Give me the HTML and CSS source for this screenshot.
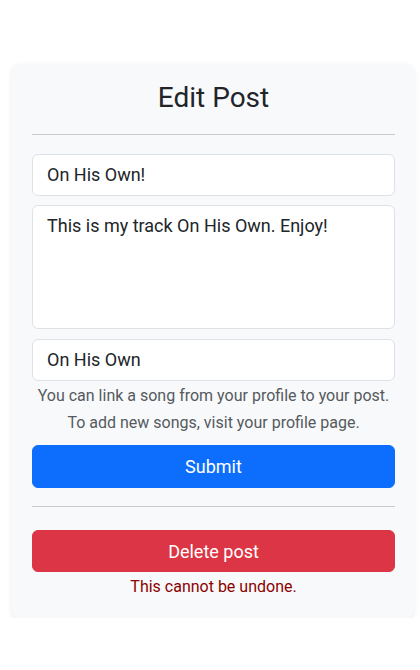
FILE: index.html
```html
<!DOCTYPE html>
<html lang="en">
<head>
<meta charset="utf-8">
<title>Edit Post</title>
<link rel="stylesheet" href="styles.css">
</head>
<body>
<main class="card">
  <h1 class="title">Edit Post</h1>
  <hr class="rule rule-top">
  <form class="form">
    <input class="field" type="text" value="On His Own!">
    <textarea class="field area">This is my track On His Own. Enjoy!</textarea>
    <input class="field" type="text" value="On His Own">
    <p class="help help-first">You can link a song from your profile to your post.</p>
    <p class="help">To add new songs, visit your profile page.</p>
    <button class="btn btn-primary" type="button">Submit</button>
  </form>
  <hr class="rule rule-bottom">
  <button class="btn btn-danger" type="button">Delete post</button>
  <p class="warning">This cannot be undone.</p>
</main>
</body>
</html>
```

FILE: styles.css
```css
* { box-sizing: border-box; }

html, body {
  margin: 0;
  padding: 0;
  background: #ffffff;
}

body {
  font-family: Roboto, "Liberation Sans", sans-serif;
  color: #212529;
  padding-top: 64px;
}

.card {
  width: 402px;
  margin-left: 12px;
  background: #f8f9fa;
  border-radius: 8px;
  box-shadow: 0 2px 6px rgba(0, 0, 0, 0.08);
  padding: 17px 19px 19px 20px;
  display: flex;
  flex-direction: column;
}

.title {
  margin: 0;
  font-size: 28px;
  font-weight: 400;
  line-height: 1.2;
  text-align: center;
  color: #212529;
}

.rule {
  width: 100%;
  margin: 0;
  border: 0;
  border-top: 1px solid #c9cbcd;
}

.rule-top {
  margin-top: 19px;
  margin-bottom: 19px;
}

.form {
  display: flex;
  flex-direction: column;
}

.field {
  display: block;
  width: 100%;
  height: 42px;
  padding: 6.5px 14px;
  font-family: inherit;
  font-size: 18px;
  line-height: 27px;
  color: #212529;
  background: #ffffff;
  border: 1px solid #dee2e6;
  border-radius: 6px;
  margin: 0 0 9.5px 0;
  outline: none;
}

.area {
  height: 124px;
  resize: none;
  padding-top: 6px;
}

.help {
  margin: 3px 0 0;
  font-size: 16px;
  line-height: 24px;
  text-align: center;
  color: #555a5f;
}

.help-first {
  margin-top: -6.5px;
}

.btn {
  display: block;
  width: 100%;
  height: 43px;
  font-family: inherit;
  font-size: 18px;
  line-height: 27px;
  color: #ffffff;
  border-radius: 6px;
  border: 1px solid transparent;
  padding: 7px 12px;
  text-align: center;
}

.btn-primary {
  background: #0d6efd;
  border-color: #0d6efd;
  margin-top: 10px;
}

.rule-bottom {
  margin-top: 18px;
  margin-bottom: 23px;
}

.btn-danger {
  background: #dc3545;
  border-color: #dc3545;
  height: 42.5px;
}

.warning {
  margin: 2.5px 0 0;
  font-size: 16px;
  line-height: 24px;
  text-align: center;
  color: #8b0000;
}
```
